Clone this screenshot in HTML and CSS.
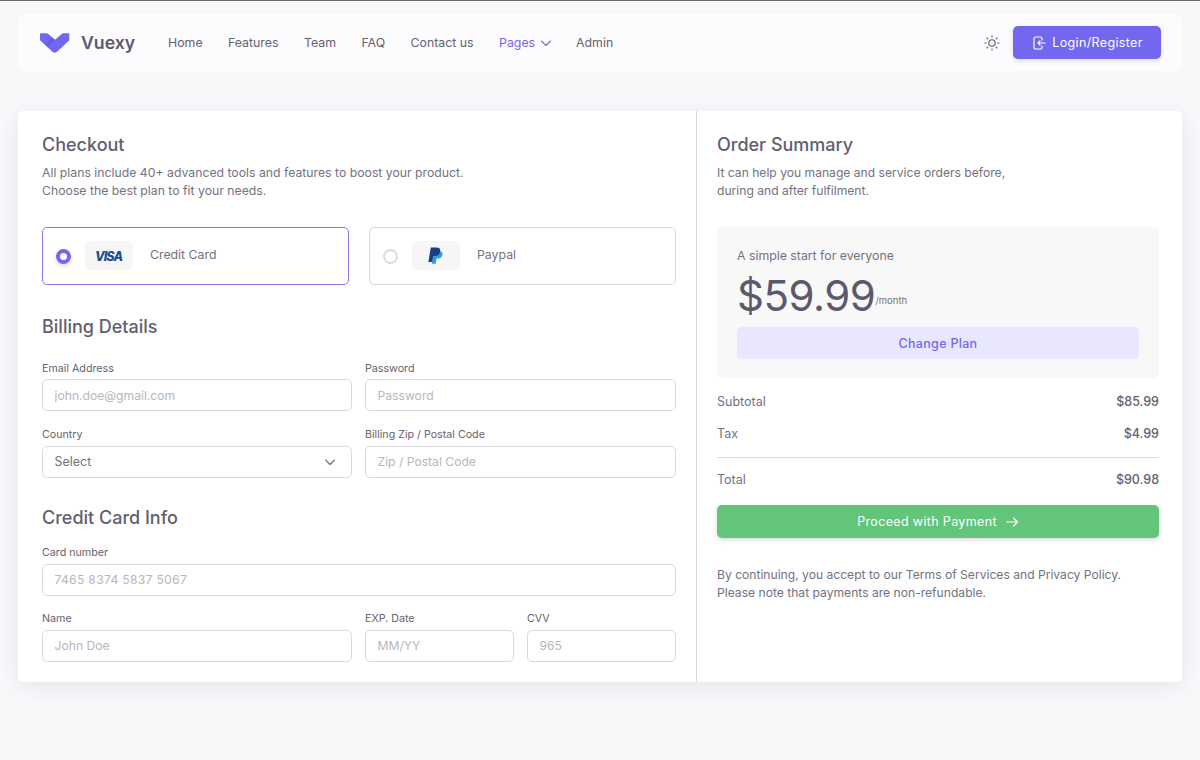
FILE: index.html
```html
<!DOCTYPE html>
<html lang="en">
<head>
<meta charset="utf-8">
<title>Checkout</title>
<link rel="stylesheet" href="styles.css">
</head>
<body>
<div class="topline"></div>
<div class="page">
  <nav class="nav">
    <div class="brand">
      <svg class="logo" width="30" height="20" viewBox="0 0 30 20"><path d="M0 .8Q0 .2 .8 .2H6.500Q7.300 .2 8 .8L15 6.800L22 .8Q22.700 .2 23.500 .2H28.500Q29.300 .2 29.300 .8V6.500Q29.300 7.400 28.600 8.100L17 18.800Q14.700 20.500 12.500 18.800L.8 8.100Q0 7.400 0 6.500Z" fill="#7367f0"/><path d="M8 14.500L15 6.800L11.500 3.800L5 11.800Z" fill="#5f53d8" opacity=".4"/></svg>
      <span class="brand-name">Vuexy</span>
    </div>
    <div class="links">
      <a>Home</a><a>Features</a><a>Team</a><a>FAQ</a><a>Contact us</a>
      <a class="active">Pages <svg width="10" height="12" viewBox="1 0 10 12" fill="none" stroke="#7367f0" stroke-width="1.100" stroke-linecap="round" stroke-linejoin="round"><path d="M1.500 4L6 8.500L10.500 4"/></svg></a>
      <a>Admin</a>
    </div>
    <div class="nav-right">
      <svg width="16" height="16" viewBox="0 0 16 16" fill="none" stroke="#5d596c" stroke-width="1.100" stroke-linecap="round"><circle cx="8" cy="8" r="3.200"/><path d="M8 .9v1.200M8 13.900v1.200M.9 8h1.200M13.900 8h1.200M3 3l.8.8M12.200 12.200l.8.8M3 13l.8-.8M12.200 3.800l.8-.8"/></svg>
      <button class="btn-login"><svg width="16" height="16" viewBox="0 0 16 16" fill="none" stroke="#fff" stroke-width="1.200" stroke-linecap="round" stroke-linejoin="round"><path d="M11 5V3.500A1.500 1.500 0 0 0 9.500 2h-5A1.500 1.500 0 0 0 3 3.500v9A1.500 1.500 0 0 0 4.500 14h5a1.500 1.500 0 0 0 1.500-1.500V11"/><path d="M14 8H7M9 6L7 8l2 2"/></svg>Login/Register</button>
    </div>
  </nav>

  <main class="card">
    <section class="left">
      <h2 class="title">Checkout</h2>
      <p class="text">All plans include 40+ advanced tools and features to boost your product.<br>Choose the best plan to fit your needs.</p>
      <div class="methods">
        <label class="method selected">
          <span class="radio on"></span>
          <span class="pay-logo"><svg class="visa" width="30" height="13" viewBox="0 0 30 13"><path d="M1.500 3.200Q3.500 3.300 5.500 5.500L5 3H1.500Z" fill="#f0a030"/><text x="1" y="12" textLength="28" class="visa-text">VISA</text></svg></span>
          <span class="method-name">Credit Card</span>
        </label>
        <label class="method">
          <span class="radio"></span>
          <span class="pay-logo"><svg width="16" height="18" viewBox="0 0 16 18"><path d="M5.500 4.500h6.500c1.800 0 2.800 1.200 2.400 3.200-.5 2.600-2.100 3.800-4.200 3.800H8.500l-.7 5.200H4z" fill="#2d9fdd"/><path d="M2.800.5h5.700c2.800 0 4.200 1.500 3.700 4-.6 3-2.600 4.500-5.200 4.500H5.200l-.9 6H.4z" fill="#1f3a84"/></svg></span>
          <span class="method-name">Paypal</span>
        </label>
      </div>

      <h2 class="title section">Billing Details</h2>
      <div class="grid-2">
        <div class="field"><label>Email Address</label><input placeholder="john.doe@gmail.com"></div>
        <div class="field"><label>Password</label><input placeholder="Password"></div>
        <div class="field"><label>Country</label>
          <div class="select">Select<svg width="14" height="14" viewBox="0 0 14 14" fill="none" stroke="#6f6b7d" stroke-width="1.100" stroke-linecap="round" stroke-linejoin="round"><path d="M2.500 5l4.500 4.500L11.500 5"/></svg></div>
        </div>
        <div class="field"><label>Billing Zip / Postal Code</label><input placeholder="Zip / Postal Code"></div>
      </div>

      <h2 class="title section2">Credit Card Info</h2>
      <div class="field"><label>Card number</label><input class="card-number" placeholder="7465 8374 5837 5067"></div>
      <div class="grid-3">
        <div class="field"><label>Name</label><input placeholder="John Doe"></div>
        <div class="field"><label>EXP. Date</label><input placeholder="MM/YY"></div>
        <div class="field"><label>CVV</label><input placeholder="965"></div>
      </div>
    </section>

    <aside class="right">
      <h2 class="title">Order Summary</h2>
      <p class="text">It can help you manage and service orders before,<br>during and after fulfilment.</p>
      <div class="plan">
        <p class="plan-sub">A simple start for everyone</p>
        <div class="price"><span class="amount">$59.99</span><span class="per">/month</span></div>
        <button class="btn-plan">Change Plan</button>
      </div>
      <div class="row"><span>Subtotal</span><b>$85.99</b></div>
      <div class="row"><span>Tax</span><b>$4.99</b></div>
      <hr class="divider">
      <div class="row total"><span>Total</span><b>$90.98</b></div>
      <button class="btn-pay">Proceed with Payment<svg width="14" height="14" viewBox="0 0 14 14" fill="none" stroke="#fff" stroke-width="1.100" stroke-linecap="round" stroke-linejoin="round"><path d="M1.500 7h11M8.500 3l4 4-4 4"/></svg></button>
      <p class="text legal">By continuing, you accept to our Terms of Services and Privacy Policy.<br>Please note that payments are non-refundable.</p>
    </aside>
  </main>
</div>
</body>
</html>
```
FILE: styles.css
```css
* { box-sizing: border-box; }
html, body { margin: 0; height: 760px; overflow: hidden; }
body {
  background: #f8f7fa;
  color: #75717f;
  font-family: Inter, "Liberation Sans", sans-serif;
  font-size: 13px;
}
.topline { height: 1px; background: #6d6d6d; }
.page { padding: 13px 18px 0; }

.nav {
  height: 57px;
  display: flex;
  align-items: center;
  padding: 0 21px 0 22px;
  background: rgba(255, 255, 255, .5);
  border-radius: 6px;
}
.brand { display: flex; align-items: center; gap: 11px; width: 128px; }
.logo { flex: none; }
.brand-name { font-size: 17.700px; font-weight: 600; color: #5d596c; }
.links { display: flex; align-items: center; gap: 25.400px; font-size: 12.350px; color: #66626f; font-weight: 400; }
.links a.active { color: #7367f0; display: flex; align-items: center; gap: 5.500px; }
.nav-right { margin-left: auto; display: flex; align-items: center; gap: 13px; }
.btn-login {
  height: 33px;
  width: 148px;
  display: flex;
  align-items: center;
  justify-content: center;
  gap: 5px;
  background: #7367f0;
  color: #fff;
  border: 0;
  border-radius: 5px;
  font: 400 12.500px Inter, sans-serif;
  letter-spacing: .36px;
  box-shadow: 0 2px 4px rgba(165, 163, 174, .35);
}

.card {
  margin-top: 40px;
  height: 571px;
  display: flex;
  background: #fff;
  border-radius: 5px;
  box-shadow: 0 4px 18px rgba(75, 70, 92, .1);
}
.left { width: 679px; padding: 22px 20px 0 24px; border-right: 1px solid #dbdade; }
.right { flex: 1; padding: 22px 23px 0 20px; }

.title { margin: 0; font-size: 18px; line-height: 24px; font-weight: 500; color: #625e70; }
.text { margin: 7px 0 0; font-size: 12.250px; line-height: 18px; }
.right .text { font-size: 12.120px; }

.methods { display: flex; gap: 20px; margin-top: 27px; }
.method {
  flex: 1;
  height: 58px;
  display: flex;
  align-items: center;
  padding: 0 13px;
  border: 1px solid #dbdade;
  border-radius: 5px;
}
.method.selected { border-color: #8479f2; }
.radio { width: 15px; height: 15px; border-radius: 50%; border: 2px solid #dbdade; background: #fff; flex: none; margin-right: 14px; }
.radio.on { border: 4.500px solid #7367f0; box-shadow: 0 2px 4px rgba(165, 163, 174, .4); }
.pay-logo {
  width: 48px;
  height: 29px;
  margin-bottom: 1px;
  background: #f6f6f7;
  border-radius: 5px;
  display: flex;
  align-items: center;
  justify-content: center;
  margin-right: 17px;
  flex: none;
}
.visa { overflow: visible; }
.visa-text { font: italic 800 12.500px Inter, sans-serif; fill: #1f4c8f; }
.method-name { font-size: 12.300px; margin-bottom: 4px; }

.section { margin-top: 29.500px; }
.section2 { margin-top: 28.500px; }
.grid-2 { display: grid; grid-template-columns: 310px 1fr; gap: 17px 13px; margin-top: 23px; }
.grid-3 { display: grid; grid-template-columns: 310px 149px 1fr; gap: 13px; margin-top: 16.500px; }
.section2 + .field { margin-top: 16px; }
.field label { display: block; font-size: 10.700px; line-height: 14px; color: #66626f; margin-bottom: 3.500px; }
.field input, .select {
  display: flex;
  width: 100%;
  height: 32px;
  padding: 0 11.500px;
  align-items: center;
  justify-content: space-between;
  border: 1px solid #dbdade;
  border-radius: 5px;
  background: #fff;
  font: 12.150px Inter, sans-serif;
  color: #75717f;
  outline: 0;
}
.field .card-number { letter-spacing: .3px; }
.select { padding-right: 14px; font-size: 12.500px; }
.field input::placeholder { color: #b7b5be; opacity: 1; }

.plan {
  height: 151px;
  margin-top: 27px;
  padding: 19px 20px 0;
  background: #f8f8f8;
  border-radius: 5px;
}
.plan-sub { margin: 0; font-size: 12.300px; line-height: 19px; }
.price { display: flex; align-items: flex-end; margin-top: 7px; height: 48px; }
.amount { font-size: 42px; line-height: 48px; color: #5d596c; font-weight: 400; letter-spacing: -.5px; }
.per { font-size: 9.500px; line-height: 38px; }
.btn-plan {
  width: 100%;
  height: 32px;
  margin-top: 7px;
  border: 0;
  border-radius: 5px;
  background: #e9e7fd;
  color: #7367f0;
  font: 500 12.500px Inter, sans-serif;
  letter-spacing: .3px;
}
.row { display: flex; justify-content: space-between; align-items: center; height: 19px; font-size: 12.500px; margin-top: 13px; }
.right .plan + .row { margin-top: 14px; }
.row b { font-weight: 500; color: #66626f; }
.divider { border: 0; border-top: 1px solid #dbdade; margin: 14px 0 0; }
.row.total { margin-top: 12px; }
.btn-pay {
  width: 100%;
  height: 33px;
  margin-top: 16px;
  display: flex;
  align-items: center;
  justify-content: center;
  gap: 8px;
  border: 0;
  border-radius: 5px;
  background: #62c579;
  color: #fff;
  font: 400 12.500px Inter, sans-serif;
  letter-spacing: .35px;
  box-shadow: 0 2px 4px rgba(165, 163, 174, .4);
}
.text.legal { margin-top: 28px; }
```
